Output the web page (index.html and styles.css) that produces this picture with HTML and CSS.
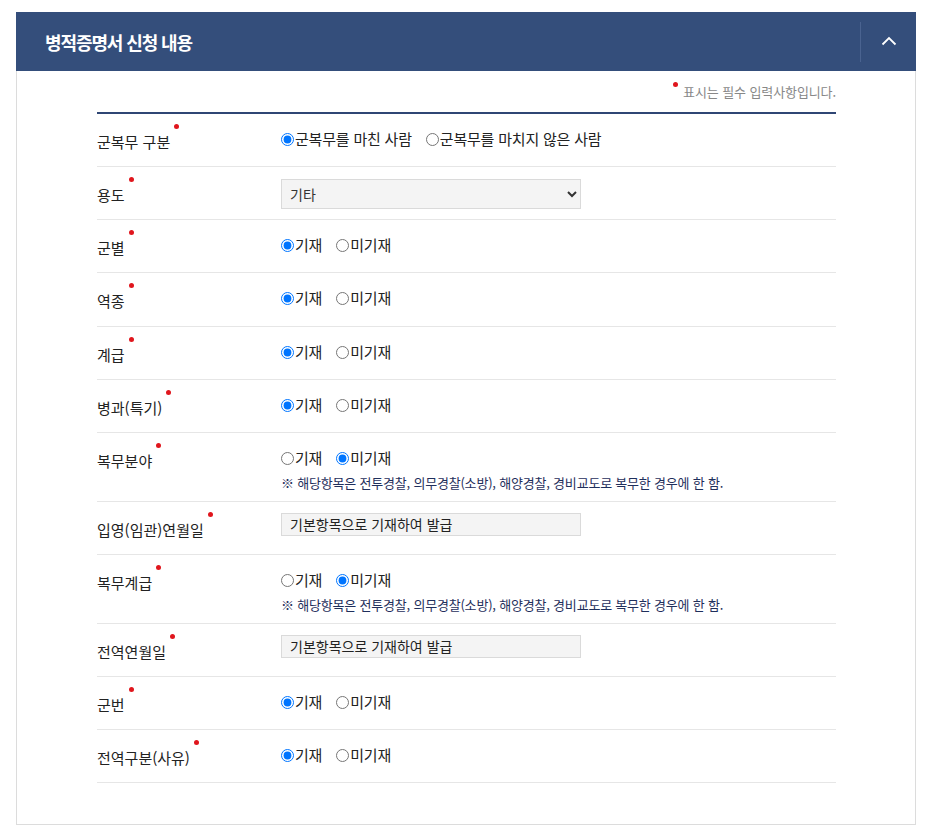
FILE: index.html
```html
<!DOCTYPE html>
<html lang="ko">
<head>
<meta charset="utf-8">
<title>병적증명서 신청 내용</title>
<link rel="stylesheet" href="styles.css">
</head>
<body>
<section class="panel">
  <header class="panel-head">
    <h2 class="panel-title">병적증명서 신청 내용</h2>
    <button class="toggle" type="button" aria-label="접기">
      <svg width="16" height="10" viewBox="0 0 16 10"><path d="M1.5 8.5 L8 2 L14.5 8.5" fill="none" stroke="#fff" stroke-width="1.8"/></svg>
    </button>
  </header>
  <div class="panel-body">
    <p class="req-note"><span class="dot"></span>표시는 필수 입력사항입니다.</p>
    <div class="form">
      <div class="row">
        <div class="label"><span class="req">군복무 구분</span></div>
        <div class="value">
          <div class="radios">
            <label class="radio"><input type="radio" name="r1" checked>군복무를 마친 사람</label>
            <label class="radio"><input type="radio" name="r1">군복무를 마치지 않은 사람</label>
          </div>
        </div>
      </div>
      <div class="row">
        <div class="label"><span class="req">용도</span></div>
        <div class="value">
          <select class="select"><option>기타</option></select>
        </div>
      </div>
      <div class="row">
        <div class="label"><span class="req">군별</span></div>
        <div class="value"><div class="radios">
          <label class="radio"><input type="radio" name="r3" checked>기재</label>
          <label class="radio"><input type="radio" name="r3">미기재</label>
        </div></div>
      </div>
      <div class="row">
        <div class="label"><span class="req">역종</span></div>
        <div class="value"><div class="radios">
          <label class="radio"><input type="radio" name="r4" checked>기재</label>
          <label class="radio"><input type="radio" name="r4">미기재</label>
        </div></div>
      </div>
      <div class="row">
        <div class="label"><span class="req">계급</span></div>
        <div class="value"><div class="radios">
          <label class="radio"><input type="radio" name="r5" checked>기재</label>
          <label class="radio"><input type="radio" name="r5">미기재</label>
        </div></div>
      </div>
      <div class="row">
        <div class="label"><span class="req">병과(특기)</span></div>
        <div class="value"><div class="radios">
          <label class="radio"><input type="radio" name="r6" checked>기재</label>
          <label class="radio"><input type="radio" name="r6">미기재</label>
        </div></div>
      </div>
      <div class="row">
        <div class="label"><span class="req">복무분야</span></div>
        <div class="value"><div class="radios">
          <label class="radio"><input type="radio" name="r7">기재</label>
          <label class="radio"><input type="radio" name="r7" checked>미기재</label>
        </div>
        <p class="hint">※ 해당항목은 전투경찰, 의무경찰(소방), 해양경찰, 경비교도로 복무한 경우에 한 함.</p></div>
      </div>
      <div class="row">
        <div class="label"><span class="req">입영(임관)연월일</span></div>
        <div class="value"><input class="text" type="text" value="기본항목으로 기재하여 발급" readonly></div>
      </div>
      <div class="row">
        <div class="label"><span class="req">복무계급</span></div>
        <div class="value"><div class="radios">
          <label class="radio"><input type="radio" name="r9">기재</label>
          <label class="radio"><input type="radio" name="r9" checked>미기재</label>
        </div>
        <p class="hint">※ 해당항목은 전투경찰, 의무경찰(소방), 해양경찰, 경비교도로 복무한 경우에 한 함.</p></div>
      </div>
      <div class="row">
        <div class="label"><span class="req">전역연월일</span></div>
        <div class="value"><input class="text" type="text" value="기본항목으로 기재하여 발급" readonly></div>
      </div>
      <div class="row">
        <div class="label"><span class="req">군번</span></div>
        <div class="value"><div class="radios">
          <label class="radio"><input type="radio" name="r11" checked>기재</label>
          <label class="radio"><input type="radio" name="r11">미기재</label>
        </div></div>
      </div>
      <div class="row">
        <div class="label"><span class="req">전역구분(사유)</span></div>
        <div class="value"><div class="radios">
          <label class="radio"><input type="radio" name="r12" checked>기재</label>
          <label class="radio"><input type="radio" name="r12">미기재</label>
        </div></div>
      </div>
    </div>
  </div>
</section>
</body>
</html>
```

FILE: styles.css
```css
* { box-sizing: border-box; }
html, body { margin: 0; padding: 0; background: #fff; }
body {
  font-family: "Noto Sans CJK KR", "Noto Sans", sans-serif;
  color: #222;
  padding: 12px 17px 14px 16px;
}
.panel { width: 900px; }
.panel-head {
  height: 59px;
  background: #344e7b;
  display: flex;
  align-items: center;
  justify-content: space-between;
}
.panel-title {
  margin: 0 0 0 29px;
  color: #fff;
  font-size: 18px;
  font-weight: 700;
  letter-spacing: -1.1px;
  line-height: 24px;
}
.toggle {
  width: 56px;
  height: 40px;
  border: 0;
  border-left: 1px solid #4a6390;
  background: transparent;
  display: flex;
  align-items: center;
  justify-content: center;
  padding: 0 0 2px 0;
  cursor: pointer;
}
.panel-body {
  border: 1px solid #dcdcdc;
  border-top: 0;
  padding: 10px 79px 41px 80px;
}
.req-note {
  margin: 0 0 10px;
  text-align: right;
  font-size: 13px;
  line-height: 21px;
  color: #888;
  letter-spacing: -0.1px;
}
.req-note .dot {
  display: inline-block;
  width: 5px;
  height: 5px;
  border-radius: 50%;
  background: #e0161d;
  vertical-align: top;
  margin: 1px 5px 0 0;
}
.form { border-top: 2px solid #2f4674; }
.row {
  display: grid;
  grid-template-columns: 184px 1fr;
  min-height: 53.15px;
  padding: 12px 0 10px;
  border-bottom: 1px solid #e6e6e6;
}
.label {
  padding-top: 6px;
  font-size: 15px;
  line-height: 20px;
  letter-spacing: 0;
}
.req { position: relative; }
.req::after {
  content: "";
  position: absolute;
  right: -9px;
  top: -7px;
  width: 5px;
  height: 5px;
  border-radius: 50%;
  background: #e0161d;
}
.radios {
  display: flex;
  gap: 14px;
  height: 26px;
  align-items: center;
}
.radios .radio + .radio { margin-left: 0; }
.radio {
  display: flex;
  align-items: center;
  font-size: 15px;
  letter-spacing: -0.2px;
  line-height: 20px;
  color: #222;
}
.radio input {
  width: 13px;
  height: 13px;
  margin: 1px 1px 0 0;
}
.select {
  width: 300px;
  height: 30px;
  border: 1px solid #dadada;
  background: #f4f4f4;
  font-family: inherit;
  font-size: 14px;
  color: #333;
  padding: 0 4px;
}
.text {
  display: block;
  width: 300px;
  height: 23px;
  margin-top: -1px;
  border: 1px solid #dadada;
  background: #f4f4f4;
  font-family: inherit;
  font-size: 14px;
  color: #222;
  padding: 0 8px;
}
.hint {
  margin: 4px 0 0;
  font-size: 13px;
  line-height: 16px;
  color: #1f2f5c;
  letter-spacing: -0.2px;
}
```
